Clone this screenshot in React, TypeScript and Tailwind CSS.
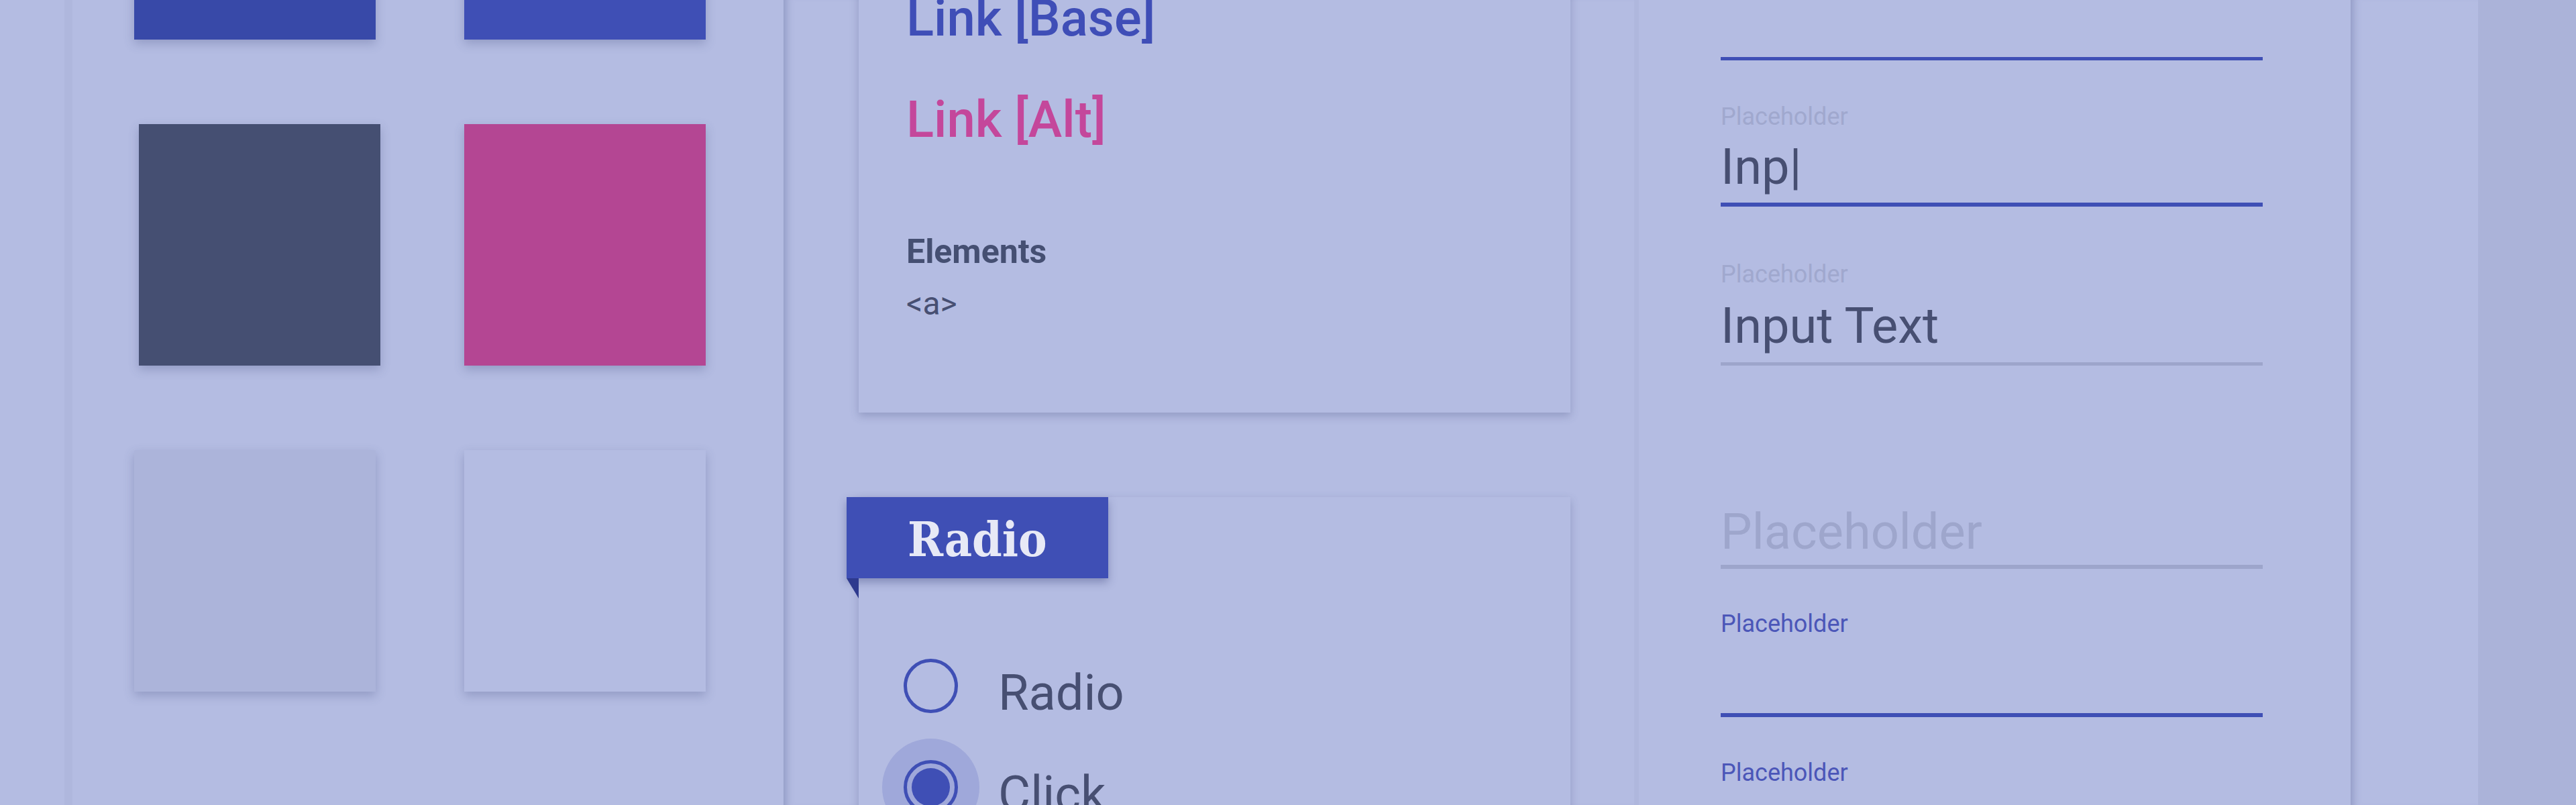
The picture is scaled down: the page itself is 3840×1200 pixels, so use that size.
import React from "react";

// style guide page under a dimmed indigo overlay

const Swatch: React.FC<{ className: string }> = ({ className }) => (
  <div className={`w-[360px] h-[360px] shadow-[0_6px_14px_rgba(70,80,130,0.3)] ${className}`} />
);

const RadioItem: React.FC<{ label: string; checked?: boolean }> = ({ label, checked = false }) => (
  <div className="h-[151px] flex items-center pl-[67px]">
    <div className="relative w-[81px] h-[81px] shrink-0">
      {checked && <div className="absolute -inset-[32px] rounded-full bg-[#9fa8da]" />}
      <div className="relative w-full h-full rounded-full border-[5px] border-[#3f4fb5] flex items-center justify-center">
        {checked && <div className="w-[57px] h-[57px] rounded-full bg-[#3f4fb5]" />}
      </div>
    </div>
    <span className="ml-[60px] mt-[20px] text-[74px] leading-[74px] text-[#474f72]">{label}</span>
  </div>
);

const SmallLabel: React.FC<{ text: string; className: string }> = ({ text, className }) => (
  <div className={`text-[36px] leading-[36px] ${className}`}>{text}</div>
);

export default function App() {
  return (
    <div className="w-[3840px] h-[1200px] overflow-hidden flex bg-[#b4bce2] font-[Roboto,sans-serif]">
      <div className="w-[96px] shrink-0" />

      {/* colour swatches */}
      <div className="w-[1072px] shrink-0 border-l-[12px] border-[#afb7dd] pl-[92px]">
        <div className="-mt-[301px] grid grid-cols-[360px_360px] gap-x-[132px] gap-y-[126px]">
          <Swatch className="bg-[#3849a8]" />
          <Swatch className="bg-[#3f4fb5]" />
          <Swatch className="bg-[#454f72] ml-[7px]" />
          <Swatch className="bg-[#b44693]" />
          <Swatch className="bg-[#acb4da]" />
          <Swatch className="bg-[#b4bce2]" />
        </div>
      </div>

      {/* links + radio cards */}
      <div className="w-[1268px] shrink-0 pl-[112px] shadow-[inset_14px_0_12px_-10px_rgba(90,100,150,0.4)]">
        <div className="w-[1061px] -mt-[100px] pt-[89px] pb-[138px] pl-[71px] bg-[#b4bce2] shadow-[0_5px_12px_rgba(70,80,130,0.3)]">
          <div className="text-[76px] leading-[76px] font-medium text-[#3f4eb7]">Link [Base]</div>
          <div className="mt-[75px] text-[76px] leading-[76px] font-medium text-[#c4479b]">Link [Alt]</div>
          <div className="mt-[134px] text-[50px] leading-[50px] font-bold text-[#454f72]">Elements</div>
          <div className="mt-[29px] text-[48px] leading-[48px] text-[#474f72]">&lt;a&gt;</div>
        </div>

        <div className="relative w-[1061px] mt-[126px] pt-[206px] pb-[60px] bg-[#b4bce2] shadow-[0_5px_12px_rgba(70,80,130,0.3)]">
          <div className="absolute -left-[18px] top-0 w-[390px] h-[121px] bg-[#3f4fb5] pl-[91px] pt-[28px] shadow-[0_6px_12px_rgba(40,50,110,0.35)]">
            <span className="text-[71px] leading-[71px] font-bold text-[#e7e9f6] font-['DejaVu_Serif_Condensed','DejaVu_Serif',serif] [font-stretch:condensed]">
              Radio
            </span>
          </div>
          <div className="absolute -left-[18px] top-[121px] w-0 h-0 border-t-[30px] border-t-[#2e3a8e] border-l-[18px] border-l-transparent" />
          <RadioItem label="Radio" />
          <RadioItem label="Click" checked />
        </div>
      </div>

      {/* text inputs */}
      <div className="w-[1068px] shrink-0 border-l-[7px] border-[#afb7dd] pl-[122px]">
        <div className="w-[808px] flex flex-col">
          <div className="mt-[85px] h-[5px] bg-[#3f4fb5]" />

          <SmallLabel text="Placeholder" className="mt-[66px] text-[#a0a8ce]" />
          <div className="mt-[20px] text-[74px] leading-[74px] text-[#474f72]">Inp|</div>
          <div className="mt-[16px] h-[6px] bg-[#3f4fb5]" />

          <SmallLabel text="Placeholder" className="mt-[83px] text-[#a0a8ce]" />
          <div className="mt-[22px] text-[74px] leading-[74px] text-[#474f72]">Input Text</div>
          <div className="mt-[17px] h-[5px] bg-[#9da5cb]" />

          <div className="mt-[211px] text-[74px] leading-[74px] text-[#9ea6cc]">Placeholder</div>
          <div className="mt-[12px] h-[6px] bg-[#9da5cb]" />

          <SmallLabel text="Placeholder" className="mt-[64px] text-[#4b56b8]" />
          <div className="mt-[115px] h-[6px] bg-[#3f4fb5]" />

          <SmallLabel text="Placeholder" className="mt-[65px] text-[#4b56b8]" />
          <div className="mt-[26px] text-[74px] leading-[74px] text-[#474f72]">Input Text</div>
        </div>
      </div>

      <div className="w-[190px] shrink-0 shadow-[inset_14px_0_12px_-10px_rgba(90,100,150,0.4)]" />
      <div className="flex-1 bg-[#abb3d9]" />
    </div>
  );
}
